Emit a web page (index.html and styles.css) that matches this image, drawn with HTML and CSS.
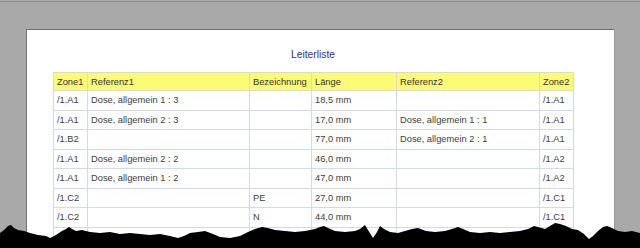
FILE: index.html
```html
<!DOCTYPE html>
<html>
<head>
<meta charset="utf-8">
<link rel="stylesheet" href="styles.css">
</head>
<body>
<div class="topline"></div>
<div class="paper">
  <div class="title">Leiterliste</div>
  <table class="list">
    <colgroup>
      <col class="c1"><col class="c2"><col class="c3"><col class="c4"><col class="c5"><col class="c6">
    </colgroup>
    <thead>
      <tr><th>Zone1</th><th>Referenz1</th><th>Bezeichnung</th><th>Länge</th><th>Referenz2</th><th>Zone2</th></tr>
    </thead>
    <tbody>
      <tr><td>/1.A1</td><td>Dose, allgemein 1 : 3</td><td></td><td>18,5 mm</td><td></td><td>/1.A1</td></tr>
      <tr><td>/1.A1</td><td>Dose, allgemein 2 : 3</td><td></td><td>17,0 mm</td><td>Dose, allgemein 1 : 1</td><td>/1.A1</td></tr>
      <tr><td>/1.B2</td><td></td><td></td><td>77,0 mm</td><td>Dose, allgemein 2 : 1</td><td>/1.A1</td></tr>
      <tr><td>/1.A1</td><td>Dose, allgemein 2 : 2</td><td></td><td>46,0 mm</td><td></td><td>/1.A2</td></tr>
      <tr><td>/1.A1</td><td>Dose, allgemein 1 : 2</td><td></td><td>47,0 mm</td><td></td><td>/1.A2</td></tr>
      <tr><td>/1.C2</td><td></td><td>PE</td><td>27,0 mm</td><td></td><td>/1.C1</td></tr>
      <tr><td>/1.C2</td><td></td><td>N</td><td>44,0 mm</td><td></td><td>/1.C1</td></tr>
      <tr><td>/1.C2</td><td>Kabel 16 : 2</td><td>L</td><td>44,0 mm</td><td></td><td>/1.C1</td></tr>
    </tbody>
  </table>
</div>
<svg class="torn" viewBox="0 0 640 30" width="640" height="30" preserveAspectRatio="none">
  <polygon fill="#000" points="0,15 4,12 8,8 11,7 14,10 18,12 24,13 30,15 38,17 46,18 50,20 56,17 62,13 66,11 69,9 72,11 76,13 82,12 90,14 100,15 110,14 120,16 130,15 140,16 150,17 160,16 170,18 178,20 184,18 190,15 198,14 205,13 213,16 220,19 230,20 240,18 248,14 255,11 262,9 268,10 275,12 285,13 295,14 305,13 315,11 320,9 324,8 328,10 335,13 345,14 355,13 360,11 365,7 368,12 373,20 377,14 380,8 384,11 390,14 398,15 405,13 412,11 418,10 426,13 435,14 445,13 452,11 458,9 463,11 470,14 480,15 490,14 500,15 510,14 520,13 528,11 534,8 538,9 545,11 550,8 555,5 560,6 566,8 572,11 578,12 584,16 589,21 593,18 598,13 603,9 607,8 612,10 618,13 625,14 632,13 640,15 640,30 0,30"/>
</svg>
</body>
</html>
```

FILE: styles.css
```css
html, body {
  margin: 0;
  padding: 0;
}
body {
  background: #a9a9a9;
  width: 640px;
  height: 248px;
  overflow: hidden;
  position: relative;
  font-family: "Liberation Sans", Arial, sans-serif;
}
.topline {
  height: 1px;
  margin-top: 1px;
  background: #8c8c8c;
}
.paper {
  margin-top: 27px;
  margin-left: 26px;
  width: 588px;
  height: 219px;
  overflow: hidden;
  background: #fff;
  border-left: 1px solid #6f6f6f;
  border-top: 1px solid #6f6f6f;
  box-shadow: 1px 0 0 #999;
  padding-left: 26px;
  padding-top: 17px;
  box-sizing: border-box;
}
.title {
  width: 520px;
  text-align: center;
  font-size: 10.3px;
  line-height: 16px;
  color: #37357e;
  margin-bottom: 9px;
}
.list {
  border-collapse: collapse;
  table-layout: fixed;
  width: 520px;
  font-size: 9.3px;
  color: #404040;
}
.c1 { width: 34px; }
.c2 { width: 162px; }
.c3 { width: 62px; }
.c4 { width: 85px; }
.c5 { width: 143px; }
.c6 { width: 34px; }
.list th, .list td {
  border: 1px solid #cfdbef;
  padding: 0 0 0 3px;
  text-align: left;
  font-weight: normal;
  white-space: nowrap;
  overflow: hidden;
}
.list th {
  background: #fbfb78;
  border-color: #dcdcc0;
  height: 17px;
  color: #333;
}
.list td {
  height: 18.5px;
}
.torn {
  position: absolute;
  left: 0;
  bottom: 0;
  display: block;
}
```
